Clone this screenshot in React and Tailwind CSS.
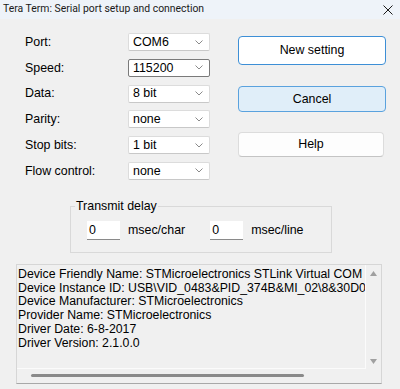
import React from "react";

const Chevron = () => (
  <svg width="8" height="5" viewBox="0 0 8 5" className="shrink-0">
    <polyline points="0.5,0.5 4,4 7.5,0.5" fill="none" stroke="#8a8a8a" strokeWidth="1" />
  </svg>
);

const Combo = ({ value, focused }) => (
  <div
    className={
      "w-[82px] h-[18px] bg-white flex items-center justify-between pl-[4px] pr-[6px] rounded-[2px] border " +
      (focused ? "border-[#7a7a7a]" : "border-[#dcdcdc] border-b-[#c8c8c8]")
    }
  >
    <span className="leading-none">{value}</span>
    <Chevron />
  </div>
);

const rows = [
  ["Port:", "COM6", false],
  ["Speed:", "115200", true],
  ["Data:", "8 bit", false],
  ["Parity:", "none", false],
  ["Stop bits:", "1 bit", false],
  ["Flow control:", "none", false],
];

const Edit = ({ value }) => (
  <div className="w-[33px] h-[19px] bg-white border-b border-[#8a8a8a] flex items-center pl-[2px] leading-none">
    {value}
  </div>
);

const lines = [
  "Device Friendly Name: STMicroelectronics STLink Virtual COM Port",
  "Device Instance ID: USB\\VID_0483&PID_374B&MI_02\\8&30D0D037&0&0002",
  "Device Manufacturer: STMicroelectronics",
  "Provider Name: STMicroelectronics",
  "Driver Date: 6-8-2017",
  "Driver Version: 2.1.0.0",
];

export default function App() {
  return (
    <div
      className="w-[400px] h-[389px] bg-[#f0f0f0] text-black text-[12.4px] overflow-hidden"
      style={{ fontFamily: '"Liberation Sans", Arial, sans-serif' }}
    >
      {/* Title bar */}
      <div className="h-[19px] bg-[#eef3f9] flex items-center justify-between pl-[3px] pr-[7px]">
        <span
          className="text-[10.4px] text-[#1a1a1a] leading-none"
          style={{ fontFamily: 'Roboto, "Liberation Sans", sans-serif' }}
        >
          Tera Term: Serial port setup and connection
        </span>
        <svg width="10" height="10" viewBox="0 0 10 10">
          <path d="M0.5 0.5 L9.5 9.5 M9.5 0.5 L0.5 9.5" stroke="#1a1a1a" strokeWidth="1" fill="none" />
        </svg>
      </div>

      {/* Top section */}
      <div className="flex pt-[14px]">
        <div className="pl-[25px] flex flex-col gap-[7.8px]">
          {rows.map(([label, value, focused]) => (
            <div key={label} className="flex items-center h-[18px]">
              <span className="w-[103px] leading-none">{label}</span>
              <Combo value={value} focused={focused} />
            </div>
          ))}
        </div>
        <div className="ml-[28px] pt-[3px] w-[148px] flex flex-col">
          <div className="h-[29px] bg-white border-[1.5px] border-[#3d8fd6] rounded-[4px] flex items-center justify-center">
            New setting
          </div>
          <div className="mt-[21px] h-[26px] bg-[#e0eef9] border border-[#5aa2de] rounded-[4px] flex items-center justify-center">
            Cancel
          </div>
          <div className="mt-[20px] h-[25px] w-[146px] bg-[#fdfdfd] border border-[#dcdcdc] border-b-[#c4c4c4] rounded-[4px] flex items-center justify-center">
            Help
          </div>
        </div>
      </div>

      {/* Transmit delay group */}
      <div className="relative ml-[70px] mt-[26px] w-[262px] h-[47px] border border-[#d9d9d9]">
        <span className="absolute left-[4px] top-[-7px] bg-[#f0f0f0] px-[1px] leading-none text-[12.4px]">
          Transmit delay
        </span>
        <div className="flex items-center pt-[14px] pl-[16px]">
          <Edit value="0" />
          <span className="ml-[8px] leading-none">msec/char</span>
          <div className="ml-[25px]">
            <Edit value="0" />
          </div>
          <span className="ml-[8px] leading-none">msec/line</span>
        </div>
      </div>

      {/* Info box */}
      <div className="ml-[16px] mt-[11px] w-[366px] h-[120px] border border-[#d6d6d6] border-b-[#a8a8a8] flex flex-col">
        <div className="flex flex-1 min-h-0">
          <div className="w-[349px] overflow-hidden border-r border-b border-[#fbfbfb] pl-[1px] pt-[3px] text-[12.3px]">
            {lines.map((l) => (
              <div key={l} className="whitespace-nowrap leading-[13.7px]">
                {l}
              </div>
            ))}
          </div>
          <div className="w-[15px] flex flex-col items-center justify-between pt-[6px] pb-[5px]">
            <svg width="7" height="5" viewBox="0 0 7 5">
              <polygon points="3.5,0 7,5 0,5" fill="#a0a0a0" />
            </svg>
            <svg width="7" height="5" viewBox="0 0 7 5">
              <polygon points="0,0 7,0 3.5,5" fill="#a0a0a0" />
            </svg>
          </div>
        </div>
        <div className="h-[14px] flex items-center pl-[14px]">
          <div className="w-[273px] h-[3px] rounded-full bg-[#8a8a8a]" />
        </div>
      </div>
    </div>
  );
}
